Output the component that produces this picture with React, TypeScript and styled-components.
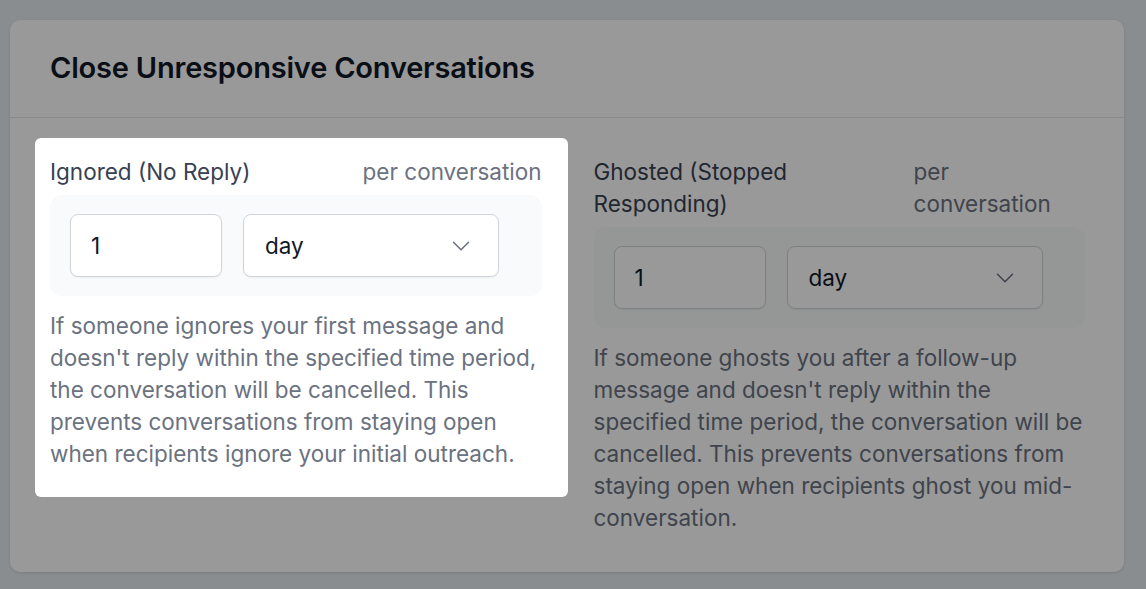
import styled, { createGlobalStyle } from "styled-components";
import { ChevronDown } from "lucide-react";

const GlobalStyle = createGlobalStyle`
	html, body {
		margin: 0;
		background: #e6ebf0;
		font-family: "Inter", "Liberation Sans", sans-serif;
	}
	* {
		box-sizing: border-box;
	}
`;

type Rule = {
	id: string;
	label: string;
	value: string;
	unit: string;
	description: string;
	highlighted?: boolean;
};

const rules: Rule[] = [
	{
		id: "ignored",
		label: "Ignored (No Reply)",
		value: "1",
		unit: "day",
		description:
			"If someone ignores your first message and doesn't reply within the specified time period, the conversation will be cancelled. This prevents conversations from staying open when recipients ignore your initial outreach.",
		highlighted: true,
	},
	{
		id: "ghosted",
		label: "Ghosted (Stopped Responding)",
		value: "1",
		unit: "day",
		description:
			"If someone ghosts you after a follow-up message and doesn't reply within the specified time period, the conversation will be cancelled. This prevents conversations from staying open when recipients ghost you mid-conversation.",
	},
];

const RuleColumn = ({ rule }: { rule: Rule }) => (
	<Column $highlighted={!!rule.highlighted}>
		<LabelRow>
			<Label>{rule.label}</Label>
			<Hint>per conversation</Hint>
		</LabelRow>
		<Controls>
			<NumberInput defaultValue={rule.value} />
			<SelectBox>
				<span>{rule.unit}</span>
				<ChevronDown size={30} strokeWidth={1.25} color="#6b7280" />
			</SelectBox>
		</Controls>
		<Description>{rule.description}</Description>
	</Column>
);

const App = () => {
	return (
		<>
			<GlobalStyle />
			<Page>
				<Card>
					<CardHeader>
						<Title>Close Unresponsive Conversations</Title>
					</CardHeader>
					<CardBody>
						{rules.map((rule) => (
							<RuleColumn key={rule.id} rule={rule} />
						))}
					</CardBody>
				</Card>
			</Page>
		</>
	);
};

export default App;

const Page = styled.main`
	min-height: 589px;
	padding: 20px 22px 17px 10px;
	background: #e6ebf0;
	overflow: hidden;
`;

const Card = styled.section`
	background: #ffffff;
	border-radius: 10px;
	box-shadow: 0 1px 3px rgba(0, 0, 0, 0.12);
`;

const CardHeader = styled.header`
	display: flex;
	align-items: center;
	height: 98px;
	padding: 0 40px;
	border-bottom: 1px solid #e5e7eb;
`;

const Title = styled.h2`
	margin: 0 0 2px;
	font-size: 29px;
	font-weight: 600;
	color: #111827;
	letter-spacing: -0.2px;
`;

const CardBody = styled.div`
	display: grid;
	grid-template-columns: 1fr 1fr;
	gap: 52px;
	align-items: start;
	padding: 38px 39px 38px 40px;
`;

/* the highlighted column is the tour spotlight: everything else sits under the dim layer */
const Column = styled.div<{ $highlighted: boolean }>`
	display: flex;
	flex-direction: column;
	${(p) =>
		p.$highlighted &&
		`
		position: relative;
		z-index: 2;
		margin: -18px -26px -27px -15px;
		padding: 18px 26px 27px 15px;
		background: #ffffff;
		border-radius: 6px;
		box-shadow: 0 0 0 2400px rgba(0, 0, 0, 0.4);
	`}
`;

const LabelRow = styled.div`
	display: flex;
	justify-content: space-between;
	font-size: 22.5px;
	line-height: 32px;
`;

const Label = styled.span`
	color: #374151;
`;

const Hint = styled.span`
	color: #6b7280;
`;

const Controls = styled.div`
	display: flex;
	gap: 21px;
	margin-top: 7px;
	padding: 19px 20px;
	background: #f9fafb;
	border-radius: 12px;
`;

const NumberInput = styled.input`
	width: 152px;
	height: 63px;
	padding: 0 20px;
	font: inherit;
	font-size: 22.5px;
	color: #111827;
	background: #ffffff;
	border: 1px solid #d1d5db;
	border-radius: 8px;
	box-shadow: 0 1px 2px rgba(0, 0, 0, 0.05);
	outline: none;
`;

const SelectBox = styled.div`
	display: flex;
	align-items: center;
	justify-content: space-between;
	width: 256px;
	height: 63px;
	padding: 0 22px 0 21px;
	font-size: 22.5px;
	color: #111827;
	background: #ffffff;
	border: 1px solid #d1d5db;
	border-radius: 8px;
	box-shadow: 0 1px 2px rgba(0, 0, 0, 0.05);
`;

const Description = styled.p`
	margin: 14px 0 0;
	font-size: 22.5px;
	line-height: 32px;
	color: #6b7280;
`;
